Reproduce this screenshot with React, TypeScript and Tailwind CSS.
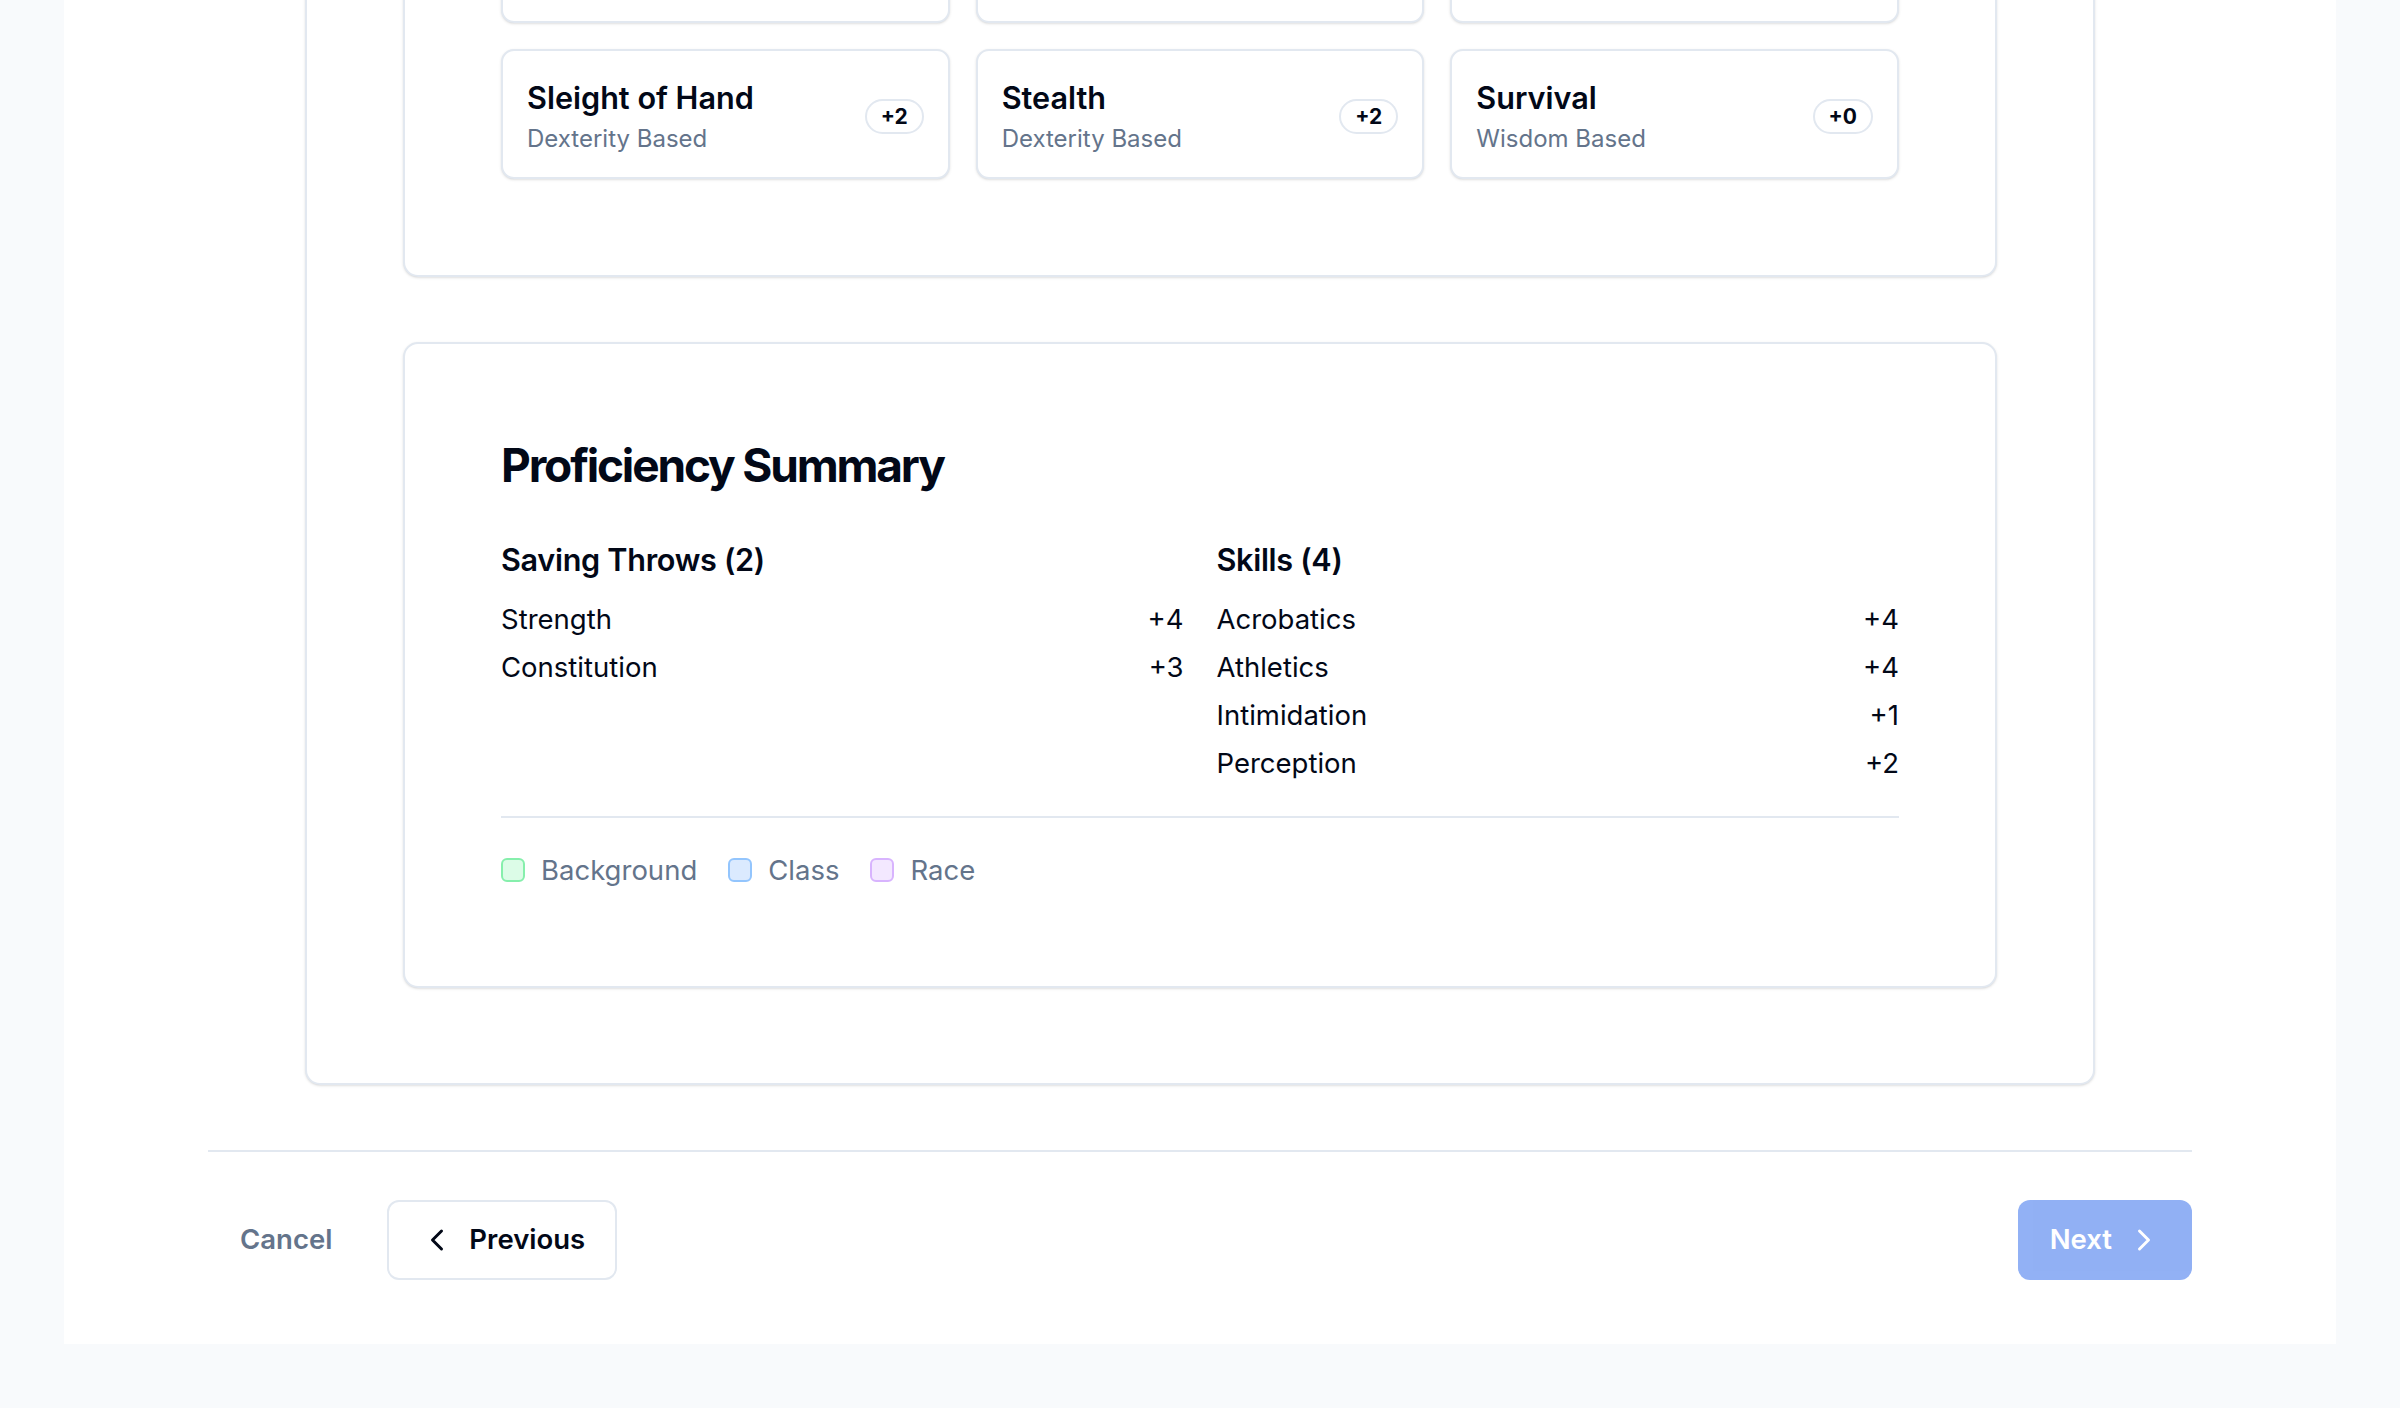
import React from "react";
import { ChevronLeft, ChevronRight } from "lucide-react";

type Skill = { name: string; base: string; mod: string };

const skills: Skill[] = [
  { name: "Sleight of Hand", base: "Dexterity Based", mod: "+2" },
  { name: "Stealth", base: "Dexterity Based", mod: "+2" },
  { name: "Survival", base: "Wisdom Based", mod: "+0" },
];

const saves = [
  { name: "Strength", mod: "+4" },
  { name: "Constitution", mod: "+3" },
];

const profSkills = [
  { name: "Acrobatics", mod: "+4" },
  { name: "Athletics", mod: "+4" },
  { name: "Intimidation", mod: "+1" },
  { name: "Perception", mod: "+2" },
];

function SkillCard({ s }: { s: Skill }) {
  return (
    <div className="flex h-[130px] items-center justify-between rounded-[13px] border-2 border-[#e2e8f0] bg-white px-[24px] pt-[5px] shadow-sm">
      <div className="flex flex-col">
        <div className="text-[30.6px] font-semibold leading-[42.8px] text-[#020817]">{s.name}</div>
        <div className="mt-[2px] text-[24px] leading-[34px] text-[#64748b]">{s.base}</div>
      </div>
      <div className="flex h-[35px] items-center rounded-full border-2 border-[#e2e8f0] px-[14px] text-[21px] font-bold leading-none text-[#020817]">
        {s.mod}
      </div>
    </div>
  );
}

function EmptyCard() {
  return <div className="h-[130px] rounded-[13px] border-2 border-[#e2e8f0] bg-white shadow-sm" />;
}

function Row({ name, mod }: { name: string; mod: string }) {
  return (
    <div className="flex items-center justify-between text-[27.5px] leading-[43px] text-[#020817]">
      <span>{name}</span>
      <span>{mod}</span>
    </div>
  );
}

function Legend({ label, box }: { label: string; box: string }) {
  return (
    <div className="flex items-center gap-[16px]">
      <div className={box} />
      <span className="text-[27.5px] leading-[43px] text-[#64748b]">{label}</span>
    </div>
  );
}

export default function App() {
  return (
    <div className="flex min-h-screen flex-col overflow-hidden bg-[#f8fafc] font-['Inter',sans-serif] text-[#020817]">
      <div className="mx-[64px] -mt-[303px] bg-white px-[144px] pb-[64px]">
        <div className="mx-[97px] rounded-[15px] border-2 border-[#e2e8f0] bg-white px-[96px] pb-[95px] pt-[96px] shadow-sm">
          <div className="rounded-[15px] border-2 border-[#e2e8f0] bg-white px-[96px] pb-[96px] pt-[96px] shadow-sm">
            <div className="grid grid-cols-3 gap-[26px]">
              <EmptyCard />
              <EmptyCard />
              <EmptyCard />
              {skills.map((s) => (
                <SkillCard key={s.name} s={s} />
              ))}
            </div>
          </div>

          <div className="mt-[65px] rounded-[15px] border-2 border-[#e2e8f0] bg-white px-[96px] pb-[94px] pt-[94px] shadow-sm">
            <h2 className="text-[46px] font-bold leading-[55px] tracking-[-0.047em] text-[#020817]">
              Proficiency Summary
            </h2>
            <div className="mt-[46px] grid grid-cols-2 gap-x-[33px]">
              <div>
                <h3 className="mb-[16px] text-[30.6px] font-semibold leading-[42.8px] tracking-[-0.01em]">Saving Throws (2)</h3>
                <div className="flex flex-col gap-[5px]">
                  {saves.map((r) => (
                    <Row key={r.name} {...r} />
                  ))}
                </div>
              </div>
              <div>
                <h3 className="mb-[16px] text-[30.6px] font-semibold leading-[42.8px] tracking-[-0.01em]">Skills (4)</h3>
                <div className="flex flex-col gap-[5px]">
                  {profSkills.map((r) => (
                    <Row key={r.name} {...r} />
                  ))}
                </div>
              </div>
            </div>
            <div className="mt-[31px] flex items-center gap-[31px] border-t-2 border-[#e2e8f0] pt-[31px]">
              <Legend label="Background" box="h-[24px] w-[24px] rounded-[6px] border-2 border-[#86efac] bg-[#dcfce7]" />
              <Legend label="Class" box="h-[24px] w-[24px] rounded-[6px] border-2 border-[#93c5fd] bg-[#dbeafe]" />
              <Legend label="Race" box="h-[24px] w-[24px] rounded-[6px] border-2 border-[#d8b4fe] bg-[#f3e8ff]" />
            </div>
          </div>
        </div>

        <div className="mt-[65px] flex items-center justify-between border-t-2 border-[#e2e8f0] pt-[48px]">
          <div className="flex items-center gap-[23px]">
            <button className="flex h-[80px] items-center px-[32px] text-[27.5px] font-semibold text-[#64748b]">
              Cancel
            </button>
            <button className="flex h-[80px] items-center gap-[14px] rounded-[12px] border-2 border-[#e2e8f0] bg-white px-[30px] text-[27.5px] font-semibold text-[#020817]">
              <ChevronLeft size={36} strokeWidth={2} />
              Previous
            </button>
          </div>
          <button className="flex h-[80px] items-center gap-[14px] rounded-[12px] bg-[#2563eb] px-[32px] pr-[30px] text-[27.5px] font-semibold text-white opacity-50">
            Next
            <ChevronRight size={36} strokeWidth={2} />
          </button>
        </div>
      </div>
    </div>
  );
}
